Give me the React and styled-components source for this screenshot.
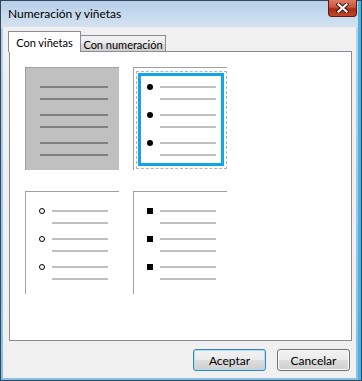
import React from 'react';
import styled, { createGlobalStyle, css } from 'styled-components';

const GlobalStyle = createGlobalStyle`
  html, body {
    margin: 0;
    padding: 0;
    overflow: hidden;
  }
  body {
    font-family: Lato, "Noto Sans", sans-serif;
    font-size: 12px;
    color: #000;
  }
`;

const Window = styled.div`
  width: 362px;
  height: 381px;
  box-sizing: border-box;
  border: 1px solid #33475c;
  background: linear-gradient(180deg, #b7cfe9 0, #d4e2f1 26px, #b3d1ee 27px, #86bfe6 100%);
  box-shadow: inset -3px 0 0 #45b4e6;
  display: flex;
  flex-direction: column;
`;

const TitleBar = styled.div`
  height: 26px;
  flex-shrink: 0;
  display: flex;
  justify-content: space-between;
  align-items: flex-start;
  padding-left: 7px;
`;

const TitleText = styled.span`
  line-height: 26px;
  font-size: 12px;
`;

const CloseButton = styled.button`
  appearance: none;
  width: 29px;
  height: 17px;
  padding: 0;
  flex-shrink: 0;
  box-sizing: border-box;
  margin: -1px 4px 0 0;
  border: 1px solid #5e1a10;
  border-top: none;
  border-radius: 0 0 4px 4px;
  background: linear-gradient(180deg, #de7a64 0%, #c9553c 45%, #a52b15 55%, #c8452a 100%);
  display: flex;
  align-items: center;
  justify-content: center;
`;

const Client = styled.div`
  flex: 1;
  margin: 0 5px 2px 2px;
  background: #f0f0f0;
  padding: 4px 4px 7px 6px;
  display: flex;
  flex-direction: column;
  min-height: 0;
`;

const TabStrip = styled.div`
  height: 20px;
  display: flex;
  align-items: flex-end;
  margin-left: -1px;
`;

const Tab = styled.div`
  box-sizing: border-box;
  border: 1px solid #898c95;
  border-bottom: none;
  display: flex;
  align-items: center;
  justify-content: center;
  white-space: nowrap;
  font-size: 11px;
  ${(p) =>
    p.$active
      ? css`
          width: 73px;
          height: 21px;
          margin-bottom: -1px;
          background: #fff;
          position: relative;
          z-index: 1;
        `
      : css`
          width: 86px;
          height: 16px;
          margin-left: -1px;
          padding-top: 1px;
          background: linear-gradient(180deg, #f3f3f3 0%, #ebebeb 50%, #dcdcdc 51%, #cfcfcf 100%);
        `}
`;

const Panel = styled.div`
  flex: 1;
  background: #fff;
  border: 1px solid #898c95;
  padding: 15px;
`;

const Gallery = styled.div`
  display: grid;
  grid-template-columns: repeat(2, 94px);
  grid-auto-rows: 103px;
  column-gap: 14px;
  row-gap: 21px;
`;

const Box = styled.div`
  position: relative;
  box-sizing: border-box;
  border-top: 1px solid #a0a0a0;
  border-left: 1px solid #a0a0a0;
  padding: 18px 0 0 ${(p) => (p.$plain ? 14 : 13)}px;
  background: ${(p) => (p.$gray ? '#c0c0c0' : '#fff')};
  display: flex;
  flex-direction: column;
  gap: 14px;
`;

const DashedFrame = styled.div`
  position: absolute;
  left: 2px;
  top: 3px;
  width: 91px;
  height: 98px;
  box-sizing: border-box;
  border: 1px dashed #b4b4b4;
`;

const SelectFrame = styled.div`
  position: absolute;
  left: 4px;
  top: 5px;
  width: 86px;
  height: 93px;
  box-sizing: border-box;
  border: 3px solid #12a6e9;
`;

const Item = styled.div`
  display: flex;
  flex-direction: column;
  gap: 10px;
`;

const Row = styled.div`
  height: 2px;
  display: flex;
  align-items: center;
  padding-left: ${(p) => (p.$indent ? 13 : 0)}px;
`;

const Line = styled.div`
  height: 2px;
  width: ${(p) => p.$width}px;
  background: ${(p) => p.$color};
`;

const Bullet = styled.div`
  flex-shrink: 0;
  width: 6px;
  height: 6px;
  margin-right: 7px;
  box-sizing: border-box;
  ${(p) =>
    p.$kind === 'disc' &&
    css`
      background: #000;
      border-radius: 50%;
    `}
  ${(p) =>
    p.$kind === 'circle' &&
    css`
      border: 1px solid #000;
      border-radius: 50%;
    `}
  ${(p) =>
    p.$kind === 'square' &&
    css`
      background: #000;
    `}
`;

const ButtonRow = styled.div`
  display: flex;
  justify-content: flex-end;
  gap: 11px;
  margin-top: 8px;
  padding-right: 2px;
`;

const Button = styled.button`
  width: 73px;
  height: 22px;
  box-sizing: border-box;
  font-family: inherit;
  font-size: 12px;
  color: #000;
  padding: 0;
  border-radius: 3px;
  border: 1px solid ${(p) => (p.$default ? '#3c7fb1' : '#707070')};
  box-shadow: inset 0 0 0 1px ${(p) => (p.$default ? '#a8e3fb' : '#fcfcfc')};
  background: linear-gradient(180deg, #f2f2f2 0%, #ebebeb 48%, #dddddd 52%, #cfcfcf 100%);
`;

const CloseIcon = () => (
  <svg width="13" height="10" viewBox="0 0 13 10">
    <path d="M2.5 1.5 L10.5 8.5 M10.5 1.5 L2.5 8.5" stroke="#4a140c" strokeWidth="4.2" strokeLinecap="square" />
    <path d="M2.5 1.5 L10.5 8.5 M10.5 1.5 L2.5 8.5" stroke="#fff" strokeWidth="2.2" strokeLinecap="square" />
  </svg>
);

const Preview = ({ bullet, gray, selected }) => {
  const color = gray ? '#808080' : '#c0c0c0';
  return (
    <Box $gray={gray} $plain={!bullet}>
      {selected && <DashedFrame />}
      {selected && <SelectFrame />}
      {[0, 1, 2].map((i) => (
        <Item key={i}>
          <Row>
            {bullet && <Bullet $kind={bullet} />}
            <Line $color={color} $width={bullet ? 56 : 68} />
          </Row>
          <Row $indent={!!bullet}>
            <Line $color={color} $width={bullet ? 56 : 68} />
          </Row>
        </Item>
      ))}
    </Box>
  );
};

export default function App() {
  return (
    <>
      <GlobalStyle />
      <Window>
        <TitleBar>
          <TitleText>Numeración y viñetas</TitleText>
          <CloseButton aria-label="Cerrar">
            <CloseIcon />
          </CloseButton>
        </TitleBar>
        <Client>
          <TabStrip>
            <Tab $active>Con viñetas</Tab>
            <Tab>Con numeración</Tab>
          </TabStrip>
          <Panel>
            <Gallery>
              <Preview gray />
              <Preview bullet="disc" selected />
              <Preview bullet="circle" />
              <Preview bullet="square" />
            </Gallery>
          </Panel>
          <ButtonRow>
            <Button $default>Aceptar</Button>
            <Button>Cancelar</Button>
          </ButtonRow>
        </Client>
      </Window>
    </>
  );
}
